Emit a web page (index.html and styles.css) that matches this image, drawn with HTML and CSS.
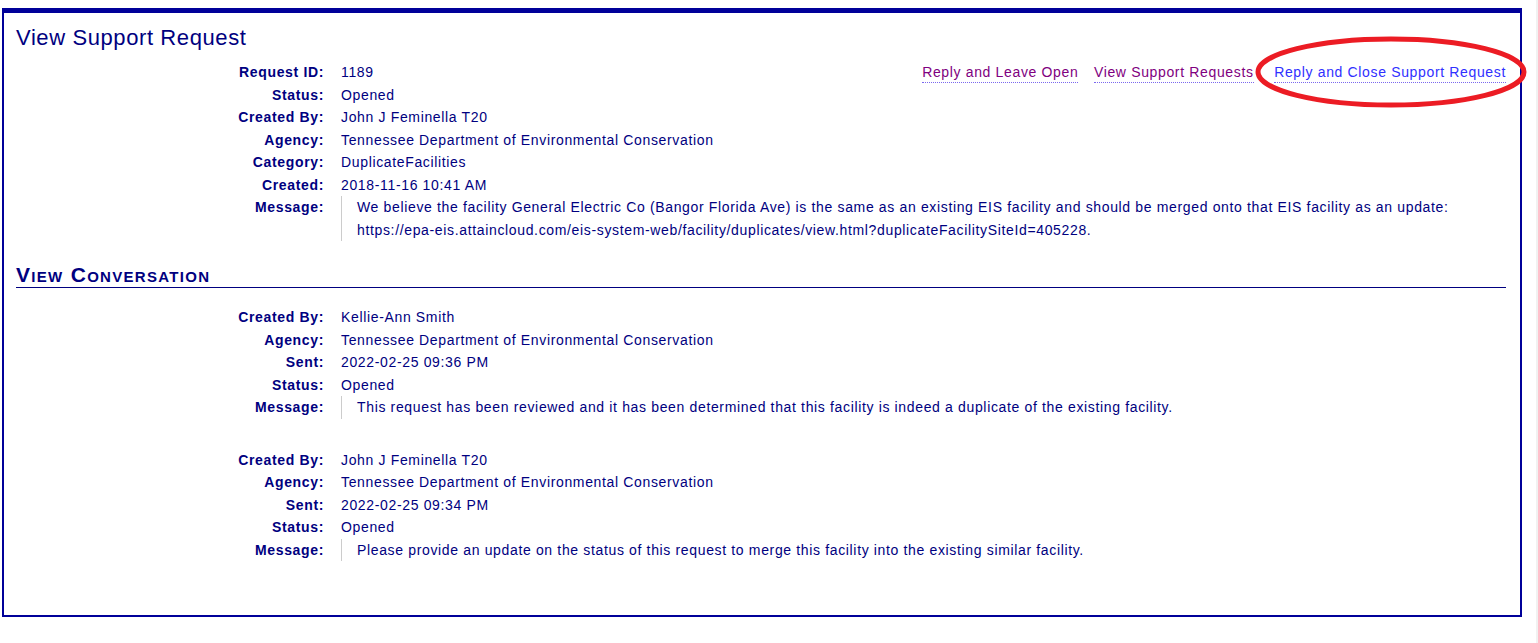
FILE: index.html
```html
<!DOCTYPE html>
<html lang="en">
<head>
    <meta charset="UTF-8">
    <meta name="viewport" content="width=device-width, initial-scale=1.0">
    <title>View Support Request</title>
    <link rel="stylesheet" href="styles.css">
</head>
<body>
    <div class="panel">
        <h1>View Support Request</h1>

        <div class="details">
            <div class="row">
                <span class="label">Request ID:</span>
                <span class="value value-top">
                    <span>1189</span>
                    <span class="actions">
                        <a href="#" class="visited">Reply and Leave Open</a>
                        <a href="#" class="visited">View Support Requests</a>
                        <a href="#" class="close-link">Reply and Close Support Request</a>
                    </span>
                </span>
            </div>
            <div class="row"><span class="label">Status:</span><span class="value">Opened</span></div>
            <div class="row"><span class="label">Created By:</span><span class="value">John J Feminella T20</span></div>
            <div class="row"><span class="label">Agency:</span><span class="value">Tennessee Department of Environmental Conservation</span></div>
            <div class="row"><span class="label">Category:</span><span class="value">DuplicateFacilities</span></div>
            <div class="row"><span class="label">Created:</span><span class="value">2018-11-16 10:41 AM</span></div>
            <div class="row">
                <span class="label">Message:</span>
                <span class="value message">We believe the facility General Electric Co (Bangor Florida Ave) is the same as an existing EIS facility and should be merged onto that EIS facility as an update: https://epa-eis.attaincloud.com/eis-system-web/facility/duplicates/view.html?duplicateFacilitySiteId=405228.</span>
            </div>
        </div>

        <h2>View Conversation</h2>

        <div class="details convo">
            <div class="row"><span class="label">Created By:</span><span class="value">Kellie-Ann Smith</span></div>
            <div class="row"><span class="label">Agency:</span><span class="value">Tennessee Department of Environmental Conservation</span></div>
            <div class="row"><span class="label">Sent:</span><span class="value">2022-02-25 09:36 PM</span></div>
            <div class="row"><span class="label">Status:</span><span class="value">Opened</span></div>
            <div class="row"><span class="label">Message:</span><span class="value message">This request has been reviewed and it has been determined that this facility is indeed a duplicate of the existing facility.</span></div>
        </div>

        <div class="details convo">
            <div class="row"><span class="label">Created By:</span><span class="value">John J Feminella T20</span></div>
            <div class="row"><span class="label">Agency:</span><span class="value">Tennessee Department of Environmental Conservation</span></div>
            <div class="row"><span class="label">Sent:</span><span class="value">2022-02-25 09:34 PM</span></div>
            <div class="row"><span class="label">Status:</span><span class="value">Opened</span></div>
            <div class="row"><span class="label">Message:</span><span class="value message">Please provide an update on the status of this request to merge this facility into the existing similar facility.</span></div>
        </div>

        <!-- red highlight drawn over the screenshot -->
        <svg class="highlight" width="272" height="72" viewBox="0 0 272 72">
            <ellipse cx="136" cy="36" rx="133" ry="33" fill="none" stroke="#ec1c24" stroke-width="5"/>
        </svg>
    </div>
    <div class="scroll-edge"></div>
</body>
</html>
```

FILE: styles.css
```css
body {
    font-family: "Liberation Sans", Arial, sans-serif;
    font-size: 14px;
    letter-spacing: 0.65px;
    color: #000080;
    background-color: #fff;
    margin: 8px 0 0 2px;
}

.panel {
    position: relative;
    width: 1490px;
    border: 2px solid #000099;
    border-top: 5px solid #000099;
    padding: 12px 14px 54px 12px;
}

h1 {
    font-size: 22px;
    font-weight: normal;
    letter-spacing: 0.6px;
    line-height: 26px;
    margin: 0 0 10px 0;
    color: #000080;
}

h2 {
    font-size: 21px;
    font-variant: small-caps;
    font-weight: bold;
    letter-spacing: 1.3px;
    line-height: 24px;
    margin: 22px 0 18px 0;
    border-bottom: 1px solid #000080;
    color: #000080;
}

.row {
    display: flex;
    line-height: 22.5px;
}

.label {
    width: 308px;
    flex-shrink: 0;
    text-align: right;
    font-weight: bold;
    margin-right: 17px;
}

.value {
    flex: 1;
}

.value-top {
    display: flex;
    justify-content: space-between;
}

.message {
    border-left: 1px solid #ccc;
    padding-left: 15px;
}

.convo + .convo {
    margin-top: 30px;
}

.actions a {
    text-decoration: none;
    border-bottom: 1px dotted #7b68ee;
    padding-bottom: 2px;
    margin-left: 11px;
}

.actions a.visited {
    color: #800080;
}

.actions a.close-link {
    color: #3030ff;
    margin-left: 16px;
}

.highlight {
    position: absolute;
    left: 1251px;
    top: 23px;
}

.scroll-edge {
    position: fixed;
    top: 0;
    right: 0;
    width: 2px;
    height: 100%;
    background-color: #f1f1f1;
}
```
